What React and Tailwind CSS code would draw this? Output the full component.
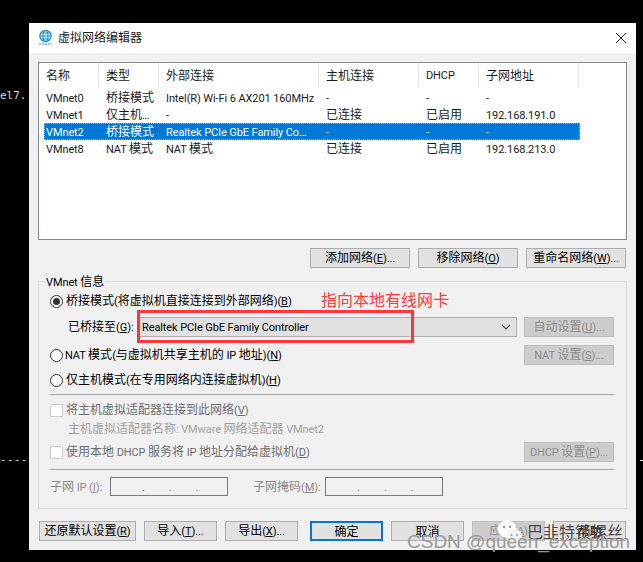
const uiFont = { fontFamily: '"Noto Sans CJK SC", sans-serif' }

const columns = ['名称', '类型', '外部连接', '主机连接', 'DHCP', '子网地址']

const rows = [
  ['VMnet0', '桥接模式', 'Intel(R) Wi-Fi 6 AX201 160MHz', '-', '-', '-'],
  ['VMnet1', '仅主机…', '-', '已连接', '已启用', '192.168.191.0'],
  ['VMnet2', '桥接模式', 'Realtek PCIe GbE Family Co…', '-', '-', '-'],
  ['VMnet8', 'NAT 模式', 'NAT 模式', '已连接', '已启用', '192.168.213.0'],
]

// latin runs are set smaller than the CJK ones, like Segoe next to YaHei
function Mix({ text }) {
  return text.split(/([A-Za-z0-9.()…:\- ]+)/).map((part, i) =>
    i % 2 ? (
      <span key={i} className="font-['Roboto',sans-serif] text-[11px] tracking-[-0.1px]">{part}</span>
    ) : (
      part
    ),
  )
}

function GlobeIcon() {
  return (
    <svg width="16" height="18" viewBox="0 0 16 18" fill="none">
      <circle cx="7.5" cy="7" r="5.6" fill="#dff1fb" stroke="#1b8fc9" strokeWidth="1.2" />
      <ellipse cx="7.5" cy="7" rx="2.5" ry="5.6" stroke="#1b8fc9" />
      <path d="M2 7h11M3 4h9M3 10h9" stroke="#1b8fc9" />
      <path d="M1 15h13" stroke="#2aa58c" strokeWidth="1.2" strokeDasharray="2 1" />
    </svg>
  )
}

function Key({ children }) {
  return <span className="font-['Roboto',sans-serif] text-[11px] underline underline-offset-1">{children}</span>
}

function Btn({ className = '', children, disabled, primary }) {
  let tone = 'bg-[#e1e1e1] border border-[#adadad] text-black'
  if (disabled) tone = 'bg-[#cccccc] border border-[#bfbfbf] text-[#8c8c8c]'
  if (primary) tone = 'bg-[#e1e1e1] border-2 border-[#0078d7] text-black'
  return (
    <div className={`h-5 flex items-center justify-center whitespace-nowrap pb-px ${tone} ${className}`}>
      <span>{children}</span>
    </div>
  )
}

function Radio({ checked }) {
  return (
    <div className="w-[13px] h-[13px] shrink-0 rounded-full border border-[#333333] bg-white flex items-center justify-center">
      {checked && <div className="w-[7px] h-[7px] rounded-full bg-[#333333]" />}
    </div>
  )
}

function Check() {
  return <div className="w-[13px] h-[13px] shrink-0 border border-[#cccccc] bg-white" />
}

function IpBox({ className = '' }) {
  return (
    <div className={`w-[118px] h-[19px] border border-[#7a7a7a] bg-[#f0f0f0] flex items-center pl-[31px] gap-[24px] text-[#777777] text-[10px] leading-none ${className}`}>
      <span>.</span>
      <span>.</span>
      <span>.</span>
    </div>
  )
}

function NetworkList() {
  return (
    <div className="h-[178px] border border-[#828790] bg-white">
      <div className="grid grid-cols-[60px_60px_160px_100px_60px_100px] h-[25px]">
        {columns.map((c) => (
          <div key={c} className="pl-[7px] pb-[2px] flex items-center border-r border-[#e5e5e5] text-[#1a1a1a]">
            <span><Mix text={c} /></span>
          </div>
        ))}
      </div>
      <div className="mt-[1px] pl-[5px]">
        {rows.map((r) => {
          const selected = r[0] === 'VMnet2'
          return (
            <div
              key={r[0]}
              className={`w-[536px] h-[17px] grid grid-cols-[60px_60px_160px_100px_60px_96px] items-center leading-none ${selected ? 'bg-[#0078d7] text-white outline-1 outline-dotted outline-offset-[-1px] outline-[#f0a030]' : 'text-[#1a1a1a]'}`}
            >
              {r.map((v, i) => (
                <div key={i} className="pl-[2px] pb-px whitespace-nowrap"><Mix text={v} /></div>
              ))}
            </div>
          )
        })}
      </div>
    </div>
  )
}

function VmnetInfo() {
  return (
    <div className="relative mt-[13px] h-[228px] border border-[#dcdcdc] pl-[11px] pr-[12px] pt-[9px]">
      <div className="absolute left-[6px] top-[-9px] px-[1px] bg-[#f0f0f0] leading-[16px]"><Mix text="VMnet 信息" /></div>

      <div className="h-5 flex items-center gap-[3px]">
        <Radio checked />
        <span className="pb-px"><Mix text="桥接模式(将虚拟机直接连接到外部网络)(" /><Key>B</Key><Mix text=")" /></span>
      </div>

      <div className="mt-[6px] h-5 flex items-center pl-[18px]">
        <span className="w-[71px] pb-px whitespace-nowrap"><Mix text="已桥接至(" /><Key>G</Key><Mix text="):" /></span>
        <div className="w-[378px] h-5 bg-[#e1e1e1] border border-[#adadad] flex items-center justify-between pl-[2px] pr-[5px] text-black">
          <span className="whitespace-nowrap"><Mix text="Realtek PCIe GbE Family Controller" /></span>
          <svg width="10" height="6" viewBox="0 0 10 6" fill="none">
            <path d="M1 1l4 4 4-4" stroke="#444444" strokeWidth="1.1" />
          </svg>
        </div>
        <Btn disabled className="ml-[7px] w-[90px]"><Mix text="自动设置(" /><Key>U</Key><Mix text=")..." /></Btn>
      </div>

      <div className="mt-[8px] h-5 flex items-center justify-between">
        <div className="flex items-center gap-[2px]">
          <Radio />
          <span className="pb-px"><Mix text="NAT 模式(与虚拟机共享主机的 IP 地址)(" /><Key>N</Key><Mix text=")" /></span>
        </div>
        <Btn disabled className="w-[90px]"><Mix text="NAT 设置(" /><Key>S</Key><Mix text=")..." /></Btn>
      </div>

      <div className="mt-[5px] h-5 flex items-center gap-[3px]">
        <Radio />
        <span className="pb-px"><Mix text="仅主机模式(在专用网络内连接虚拟机)(" /><Key>H</Key><Mix text=")" /></span>
      </div>

      <div className="mt-[4px] h-px bg-[#a0a0a0]" />

      <div className="mt-[5px] h-5 flex items-center gap-[3px] text-[#6d6d6d]">
        <Check />
        <span className="pb-px"><Mix text="将主机虚拟适配器连接到此网络(" /><Key>V</Key><Mix text=")" /></span>
      </div>

      <div className="mt-[1px] h-4 flex items-center pl-[18px] text-[#a0a0a0]">
        <span className="pb-px"><Mix text="主机虚拟适配器名称: VMware 网络适配器 VMnet2" /></span>
      </div>

      <div className="mt-[5px] h-5 flex items-center justify-between text-[#6d6d6d]">
        <div className="flex items-center gap-[3px]">
          <Check />
          <span className="pb-px"><Mix text="使用本地 DHCP 服务将 IP 地址分配给虚拟机(" /><Key>D</Key><Mix text=")" /></span>
        </div>
        <Btn disabled className="w-[90px]"><Mix text="DHCP 设置(" /><Key>P</Key><Mix text=")..." /></Btn>
      </div>

      <div className="mt-[7px] h-px bg-[#a0a0a0]" />

      <div className="mt-[7px] h-[19px] flex items-center text-[#8a8a8a]">
        <span className="w-[60px] whitespace-nowrap"><Mix text="子网 IP (" /><Key>I</Key><Mix text="):" /></span>
        <IpBox />
        <span className="ml-[25px] w-[72px] whitespace-nowrap"><Mix text="子网掩码(" /><Key>M</Key><Mix text="):" /></span>
        <IpBox />
      </div>
    </div>
  )
}

function Watermark() {
  return (
    <>
      <svg className="absolute left-[490px] top-[518px]" width="40" height="30" viewBox="0 0 40 30">
        <ellipse cx="17" cy="11" rx="9.5" ry="8.5" fill="#ffffff" />
        <ellipse cx="24" cy="18" rx="8" ry="7" fill="#f4f4f4" />
        <circle cx="14" cy="9" r="1.2" fill="#999999" />
        <circle cx="20" cy="9" r="1.2" fill="#999999" />
        <circle cx="21.5" cy="17" r="1" fill="#999999" />
        <circle cx="27" cy="17" r="1" fill="#999999" />
      </svg>
      <div className="absolute left-[527px] top-[520px] text-[16px] leading-[22px] text-[#4a4a4a] whitespace-nowrap" style={uiFont}>巴韭特锁螺丝</div>
      <div className="absolute left-[407px] top-[530px] text-[19px] leading-[24px] text-[#999999] whitespace-nowrap font-['Liberation_Sans',sans-serif]">CSDN @queen_exception</div>
    </>
  )
}

export default function App() {
  return (
    <div className="relative w-[643px] h-[562px] bg-black overflow-hidden pt-[23px] pl-[29px]">
      <div className="absolute left-0 top-[89px] text-[11px] leading-[14px] text-[#d8d8d8] font-['DejaVu_Sans_Mono',monospace]">el7.</div>
      <div className="absolute left-0 top-[453px] text-[11px] leading-[14px] tracking-[0.3px] text-[#d8d8d8] font-['DejaVu_Sans_Mono',monospace]">----</div>
      <div className="absolute left-[640px] top-[460px] w-[3px] h-px bg-[#d8d8d8]" />

      <div className="w-[607px] h-[527px] bg-[#f0f0f0] text-[12px]" style={uiFont}>
        <div className="h-[30px] bg-white flex items-center pl-[9px] pr-[9px]">
          <GlobeIcon />
          <span className="ml-[4px] pb-[2px] text-[#1a1a1a]">虚拟网络编辑器</span>
          <svg className="ml-auto" width="12" height="12" viewBox="0 0 12 12" fill="none">
            <path d="M1 1l10 10M11 1L1 11" stroke="#222222" strokeWidth="1" />
          </svg>
        </div>

        <div className="px-[9px] pt-[9px]">
          <NetworkList />

          <div className="mt-[8px] flex justify-end gap-[8px] pr-[1px]">
            <Btn className="w-[100px]"><Mix text="添加网络(" /><Key>E</Key><Mix text=")..." /></Btn>
            <Btn className="w-[100px]"><Mix text="移除网络(" /><Key>O</Key><Mix text=")" /></Btn>
            <Btn className="w-[100px]"><Mix text="重命名网络(" /><Key>W</Key><Mix text=")..." /></Btn>
          </div>

          <VmnetInfo />

          <div className="mt-[12px] flex pl-[1px]">
            <Btn className="w-[97px]"><Mix text="还原默认设置(" /><Key>R</Key><Mix text=")" /></Btn>
            <Btn className="ml-[8px] w-[73px]"><Mix text="导入(" /><Key>T</Key><Mix text=")..." /></Btn>
            <Btn className="ml-[8px] w-[73px]"><Mix text="导出(" /><Key>X</Key><Mix text=")..." /></Btn>
            <Btn primary className="ml-[12px] w-[73px]">确定</Btn>
            <Btn className="ml-[8px] w-[73px]">取消</Btn>
            <Btn disabled className="ml-[8px] w-[73px]"><Mix text="应用(" /><Key>A</Key><Mix text=")" /></Btn>
            <Btn className="ml-[8px] w-[73px]">帮助</Btn>
          </div>
        </div>
      </div>

      <div className="absolute left-[321px] top-[289px] text-[16px] leading-[20px] text-[#ff3b3b] whitespace-nowrap" style={uiFont}>指向本地有线网卡</div>
      <div className="absolute left-[137px] top-[310px] w-[277px] h-[33px] border-[3px] border-[#f83a3a]" />
      <Watermark />
    </div>
  )
}
